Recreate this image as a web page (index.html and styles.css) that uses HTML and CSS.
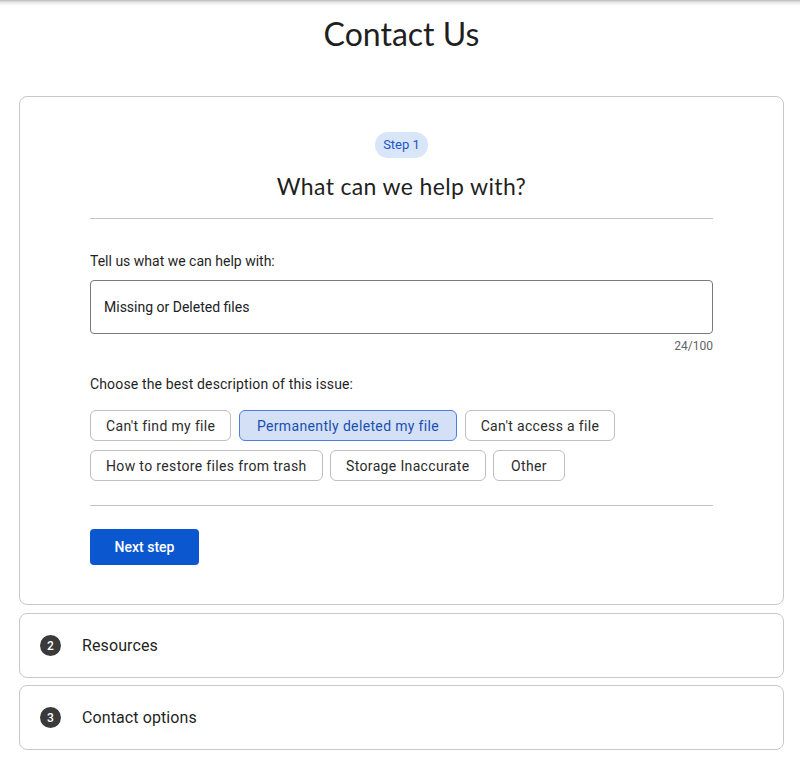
FILE: index.html
```html
<!DOCTYPE html>
<html lang="en">
<head>
<meta charset="utf-8">
<title>Contact Us</title>
<link rel="stylesheet" href="styles.css">
</head>
<body>
<div class="topshade"></div>
<main class="page">
  <h1 class="title">Contact Us</h1>
  <section class="card step-card">
    <div class="step-head">
      <span class="pill">Step 1</span>
      <h2 class="heading">What can we help with?</h2>
    </div>
    <hr class="divider">
    <label class="label" for="q">Tell us what we can help with:</label>
    <div class="input" id="q">Missing or Deleted files</div>
    <div class="counter">24/100</div>
    <p class="label label-choose">Choose the best description of this issue:</p>
    <div class="chips">
      <span class="chip">Can't find my file</span>
      <span class="chip selected">Permanently deleted my file</span>
      <span class="chip">Can't access a file</span>
      <span class="chip">How to restore files from trash</span>
      <span class="chip">Storage Inaccurate</span>
      <span class="chip chip-wide">Other</span>
    </div>
    <hr class="divider divider-bottom">
    <button class="btn">Next step</button>
  </section>
  <section class="card row-card">
    <span class="num">2</span>
    <span class="row-title">Resources</span>
  </section>
  <section class="card row-card">
    <span class="num">3</span>
    <span class="row-title">Contact options</span>
  </section>
</main>
</body>
</html>
```

FILE: styles.css
```css
* { box-sizing: border-box; }
html, body { margin: 0; padding: 0; background: #fff; }
body {
  font-family: Roboto, "Liberation Sans", Arial, sans-serif;
  color: #202124;
}
.topshade {
  height: 6px;
  background: linear-gradient(#b9b9b9, #e8e8e8 40%, #fff);
}
.page {
  width: 765px;
  margin-left: 19px;
  display: flex;
  flex-direction: column;
}
.title {
  margin: 11px 0 0;
  height: 79px;
  text-align: center;
  font-family: Lato, "Open Sans", sans-serif;
  font-weight: 400;
  font-size: 32px;
  line-height: 34px;
  color: #1f1f1f;
}
.card {
  border: 1px solid #c8c8c8;
  border-radius: 8px;
  background: #fff;
}
.step-card {
  padding: 35px 70px 39px;
  display: flex;
  flex-direction: column;
}
.step-head {
  display: flex;
  flex-direction: column;
  align-items: center;
}
.pill {
  background: #d9e5f8;
  color: #1a56c4;
  font-size: 13px;
  line-height: 26px;
  height: 26px;
  padding: 0 8px;
  border-radius: 13px;
}
.heading {
  margin: 13px 0 0;
  font-family: Lato, "Open Sans", sans-serif;
  font-weight: 400;
  font-size: 23px;
  letter-spacing: 0.35px;
  line-height: 30px;
  color: #1f1f1f;
}
.divider {
  border: 0;
  border-top: 1px solid #c4c4c4;
  margin: 17px 0 0;
  width: 100%;
}
.label {
  display: block;
  margin: 33px 0 0;
  font-size: 14px;
  line-height: 18px;
  color: #1f1f1f;
}
.input {
  margin-top: 10px;
  height: 54px;
  border: 1px solid #7a7a7a;
  border-radius: 4px;
  padding: 0 13px;
  display: flex;
  align-items: center;
  font-size: 14px;
  color: #202124;
}
.counter {
  text-align: right;
  font-size: 12px;
  line-height: 14px;
  margin-top: 5px;
  color: #5f6368;
}
.label-choose { margin-top: 22px; letter-spacing: 0.15px; }
.chips {
  margin-top: 17px;
  display: flex;
  flex-wrap: wrap;
  gap: 9px 7.5px;
  width: 560px;
}
.chip {
  height: 31px;
  display: inline-flex;
  align-items: center;
  padding: 0 15px;
  border: 1px solid #bfbfbf;
  border-radius: 6px;
  font-size: 14px;
  color: #2b2b2b;
  letter-spacing: 0.35px;
}
.chip-wide { padding: 0 17px; }
.chip.selected {
  background: #d3e0f5;
  border-color: #4a7fdc;
  color: #1a4fb0;
  padding: 0 17px;
}
.divider-bottom { margin-top: 24px; }
.btn {
  margin-top: 23px;
  align-self: flex-start;
  width: 109px;
  height: 36px;
  background: #0b57d0;
  color: #fff;
  border: 0;
  border-radius: 4px;
  font-family: Roboto, "Liberation Sans", sans-serif;
  font-weight: 500;
  font-size: 14px;
}
.row-card {
  margin-top: 8px;
  height: 65px;
  display: flex;
  align-items: center;
  padding-left: 20px;
}
.row-card + .row-card { margin-top: 7px; }
.num {
  width: 21px;
  height: 21px;
  border-radius: 50%;
  background: #3a3a3a;
  color: #fff;
  font-size: 12px;
  font-weight: 500;
  display: inline-flex;
  align-items: center;
  justify-content: center;
}
.row-title {
  margin-left: 21px;
  font-size: 16px;
  letter-spacing: 0.1px;
  color: #1f1f1f;
}
```
